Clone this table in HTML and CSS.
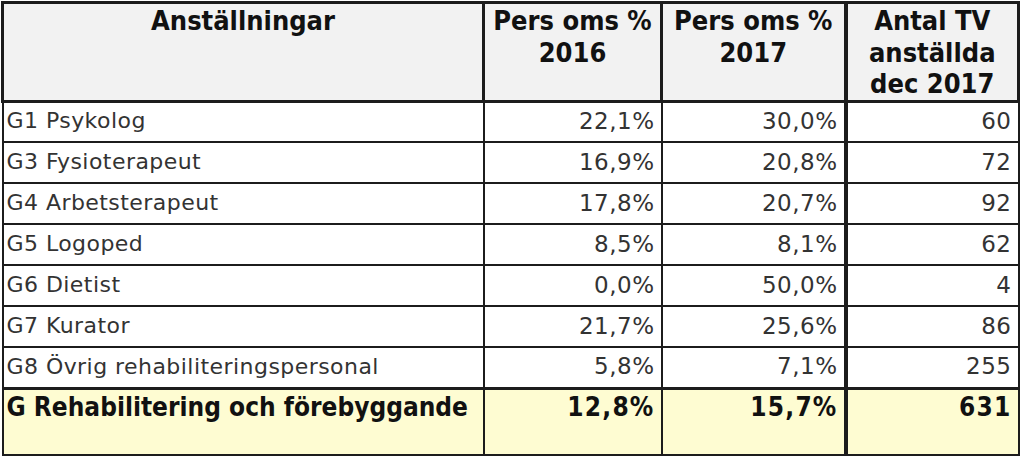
FILE: index.html
```html
<!DOCTYPE html>
<html lang="sv">
<head>
<meta charset="utf-8">
<title>Anställningar</title>
<link rel="stylesheet" href="styles.css">
</head>
<body>
<div class="wrap">
<table class="sheet">
  <colgroup>
    <col class="c1"><col class="c2"><col class="c3"><col class="c4">
  </colgroup>
  <thead>
    <tr class="head">
      <th class="name">Anställningar</th>
      <th>Pers oms %<br>2016</th>
      <th>Pers oms %<br>2017</th>
      <th class="sep">Antal TV<br>anställda<br>dec 2017</th>
    </tr>
  </thead>
  <tbody>
    <tr><td class="name">G1 Psykolog</td><td>22,1%</td><td>30,0%</td><td class="sep">60</td></tr>
    <tr><td class="name">G3 Fysioterapeut</td><td>16,9%</td><td>20,8%</td><td class="sep">72</td></tr>
    <tr><td class="name">G4 Arbetsterapeut</td><td>17,8%</td><td>20,7%</td><td class="sep">92</td></tr>
    <tr><td class="name">G5 Logoped</td><td>8,5%</td><td>8,1%</td><td class="sep">62</td></tr>
    <tr><td class="name">G6 Dietist</td><td>0,0%</td><td>50,0%</td><td class="sep">4</td></tr>
    <tr><td class="name">G7 Kurator</td><td>21,7%</td><td>25,6%</td><td class="sep">86</td></tr>
    <tr><td class="name">G8 Övrig rehabiliteringspersonal</td><td>5,8%</td><td>7,1%</td><td class="sep">255</td></tr>
    <tr class="total"><td class="name">G Rehabilitering och förebyggande</td><td>12,8%</td><td>15,7%</td><td class="sep">631</td></tr>
  </tbody>
</table>
</div>
</body>
</html>
```

FILE: styles.css
```css
html, body {
  margin: 0;
  padding: 0;
  background: #ffffff;
}

.wrap {
  padding: 1px 0 0 1px;
}

.sheet {
  border-collapse: collapse;
  table-layout: fixed;
  width: 1016px;
  font-family: "DejaVu Sans", sans-serif;
  font-size: 22px;
  color: #333333;
  border: 2px solid #3a3a3a;
}

.c1 { width: 481px; }
.c2 { width: 178px; }
.c3 { width: 184px; }
.c4 { width: 173px; }

.sheet td,
.sheet th {
  border: 2px solid #1c1c1c;
  padding: 0 6px 2px 3px;
  text-align: right;
  vertical-align: middle;
  white-space: nowrap;
  overflow: hidden;
}

.sheet td {
  font-size: 23px;
  letter-spacing: 0.5px;
}

.head {
  height: 97px;
}

.head th {
  background: #f2f2f2;
  color: #111111;
  font-family: "DejaVu Sans Condensed", "DejaVu Sans", sans-serif;
  font-stretch: condensed;
  font-weight: bold;
  font-size: 27px;
  line-height: 31.5px;
  text-align: center;
  vertical-align: top;
  padding: 1px 2px 0 2px;
  border-width: 3px;
}

.sheet tbody tr {
  height: 41px;
}

.sheet td.name {
  text-align: left;
  font-size: 22px;
  letter-spacing: 0.45px;
}

.sheet .sep {
  border-left-width: 4px;
}

.sheet tr.total {
  height: 67px;
}

.sheet .total td {
  background: #fefcd2;
  color: #111111;
  font-family: "DejaVu Sans Condensed", "DejaVu Sans", sans-serif;
  font-stretch: condensed;
  font-weight: bold;
  font-size: 26px;
  letter-spacing: 1.2px;
  vertical-align: top;
  padding-top: 2px;
  border-top-width: 3px;
}

.sheet .total td.name {
  letter-spacing: 0;
}
```
